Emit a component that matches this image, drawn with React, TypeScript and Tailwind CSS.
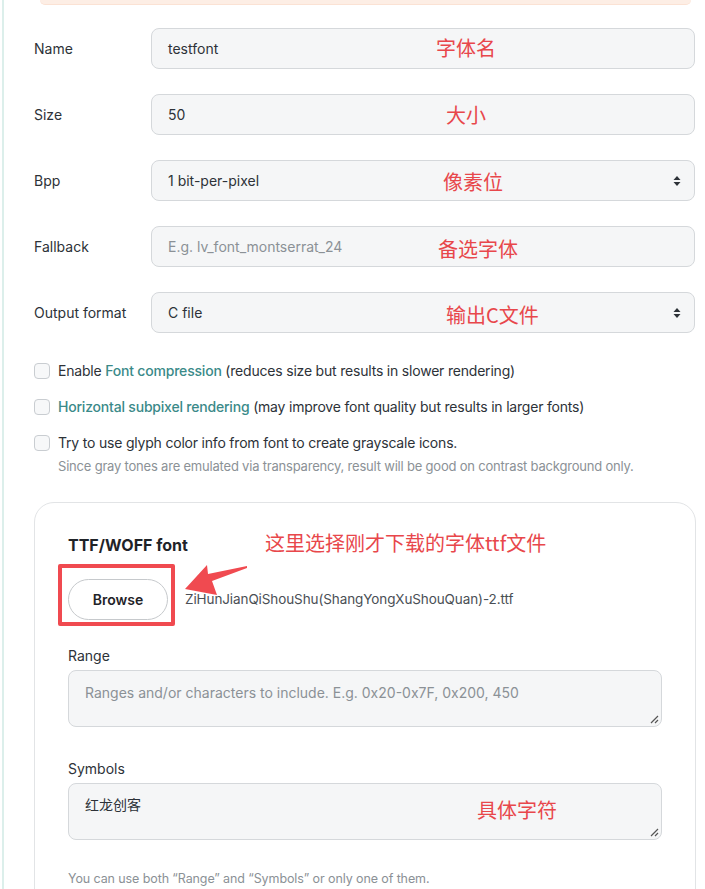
import React from "react";

const fields = [
  { label: "Name", value: "testfont", kind: "input" },
  { label: "Size", value: "50", kind: "input" },
  { label: "Bpp", value: "1 bit-per-pixel", kind: "select" },
  { label: "Fallback", value: "E.g. lv_font_montserrat_24", kind: "placeholder" },
  { label: "Output format", value: "C file", kind: "select" },
];

const notes = [
  { text: "字体名", left: "left-[436px]", top: "top-[36px]" },
  { text: "大小", left: "left-[446px]", top: "top-[103px]" },
  { text: "像素位", left: "left-[443px]", top: "top-[170px]" },
  { text: "备选字体", left: "left-[438px]", top: "top-[237px]" },
  { text: "输出C文件", left: "left-[446px]", top: "top-[303px]" },
  { text: "这里选择刚才下载的字体ttf文件", left: "left-[265px]", top: "top-[531px]" },
  { text: "具体字符", left: "left-[477px]", top: "top-[798px]" },
];

const SelectArrows = () => (
  <svg width="8" height="12" viewBox="0 0 8 12" className="absolute right-[13px] top-1/2 -translate-y-1/2">
    <path d="M4 1 L7.5 5 H0.5 Z" fill="#2d3238" />
    <path d="M4 11 L7.5 7 H0.5 Z" fill="#2d3238" />
  </svg>
);

const Resize = () => (
  <svg width="10" height="10" viewBox="0 0 10 10" className="absolute right-[2px] bottom-[2px]">
    <path d="M9 2 L2 9 M9 6 L6 9" stroke="#555" strokeWidth="1.2" />
  </svg>
);

const Checkbox = () => (
  <span className="w-4 h-4 shrink-0 rounded-[4px] border border-[#c9cdd1] bg-[#f7f8f9]" />
);

export default function App() {
  return (
    <div className="relative w-[705px] h-[889px] overflow-hidden bg-white font-['Inter','Noto_Sans_CJK_SC',sans-serif] text-[#2d3238]">
      <div className="absolute left-[2px] top-0 bottom-0 w-[2px] bg-[#dcefeb]" />
      <div className="ml-[40px] w-[651px] h-[5px] rounded-b-xl bg-[#fdeee5] border-b border-[#fbe2d4]" />

      <div className="pl-[34px] pr-[10px]">
        <div className="mt-[23px] flex flex-col gap-[25px]">
          {fields.map((f) => (
            <div key={f.label} className="flex items-center">
              <div className="w-[117px] text-[14px]">{f.label}</div>
              <div className="relative flex-1 h-[41px] rounded-lg border border-[#d5d8db] bg-[#f5f6f7] flex items-center px-4 text-[14px]">
                <span className={f.kind === "placeholder" ? "text-[#8b9196]" : ""}>{f.value}</span>
                {f.kind === "select" && <SelectArrows />}
              </div>
            </div>
          ))}
        </div>

        <div className="mt-[28px] flex flex-col gap-4 text-[14px] leading-5 tracking-[-0.2px]">
          <div className="flex items-center gap-2">
            <Checkbox />
            <span>
              Enable <span className="text-[#3b8a89] font-medium">Font compression</span> (reduces size but results in slower rendering)
            </span>
          </div>
          <div className="flex items-center gap-2">
            <Checkbox />
            <span>
              <span className="text-[#3b8a89] font-medium">Horizontal subpixel rendering</span> (may improve font quality but results in larger fonts)
            </span>
          </div>
          <div>
            <div className="flex items-center gap-2">
              <Checkbox />
              <span>Try to use glyph color info from font to create grayscale icons.</span>
            </div>
            <div className="mt-[4px] pl-6 text-[13px] leading-[18px] text-[#8b9196]">
              Since gray tones are emulated via transparency, result will be good on contrast background only.
            </div>
          </div>
        </div>

        <div className="mt-[27px] w-[662px] rounded-[20px] border border-[#e2e4e6] px-[33px] pt-[31px] pb-10">
          <div className="text-[16px] leading-[22px] font-bold text-[#1f2328]">TTF/WOFF font</div>
          <div className="mt-[23px] flex items-center">
            <button className="w-[100px] h-[41px] rounded-full border border-[#c6c9cc] bg-white text-[14px] font-semibold text-[#1f2328]">
              Browse
            </button>
            <span className="ml-[17px] text-[13.5px] text-[#4a4f55] tracking-[-0.1px]">ZiHunJianQiShouShu(ShangYongXuShouQuan)-2.ttf</span>
          </div>

          <div className="mt-[26px] text-[14px] leading-5">Range</div>
          <div className="relative mt-[4px] h-[57px] rounded-lg border border-[#d5d8db] bg-[#f5f6f7] px-4 pt-[11px] text-[14px] text-[#8b9196]">
            Ranges and/or characters to include. E.g. 0x20-0x7F, 0x200, 450
            <Resize />
          </div>

          <div className="mt-[32px] text-[14px] leading-5">Symbols</div>
          <div className="relative mt-[4px] h-[57px] rounded-lg border border-[#d5d8db] bg-[#f5f6f7] px-4 pt-[10px] text-[14px]">
            红龙创客
            <Resize />
          </div>

          <div className="mt-[30px] text-[12.5px] leading-[18px] text-[#8b9196] tracking-[-0.1px]">
            You can use both “Range” and “Symbols” or only one of them.
          </div>
        </div>
      </div>

      {notes.map((n) => (
        <div
          key={n.text}
          className={`absolute ${n.left} ${n.top} text-[20px] leading-6 text-[#e8474b] font-['Noto_Sans_CJK_SC',sans-serif]`}
        >
          {n.text}
        </div>
      ))}

      <div className="absolute left-[58px] top-[564px] w-[117px] h-[62px] border-4 border-[#f04a50] rounded-[2px]" />
      <svg width="66" height="34" viewBox="0 0 66 34" className="absolute left-[183px] top-[562px]">
        <path d="M2 27 L24 3 L25 12 L64 4 L64 6 L29 19 L34 33 Z" fill="#f04a50" />
      </svg>
    </div>
  );
}
